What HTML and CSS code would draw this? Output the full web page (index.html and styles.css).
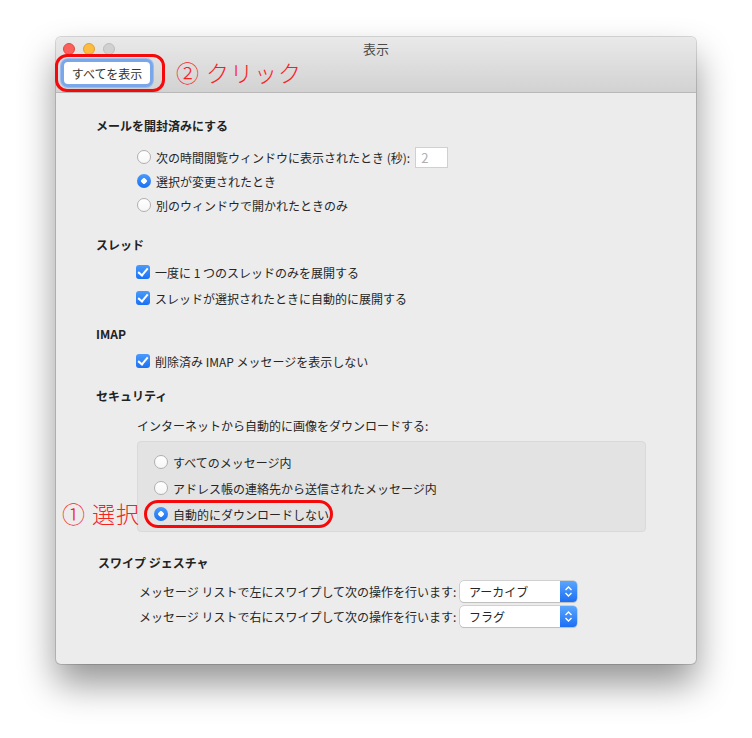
FILE: index.html
```html
<!DOCTYPE html>
<html lang="ja">
<head>
    <meta charset="UTF-8">
    <title>表示</title>
    <link rel="stylesheet" href="styles.css">
</head>
<body>
<div class="window">
    <div class="titlebar">
        <div class="title-row">
            <div class="lights">
                <span class="light red"></span>
                <span class="light yellow"></span>
                <span class="light gray"></span>
            </div>
            <div class="title">表示</div>
        </div>
        <div class="toolbar">
            <button class="show-all">すべてを表示</button>
        </div>
    </div>

    <div class="content">
        <section class="group">
            <h2>メールを開封済みにする</h2>
            <div class="rows">
                <label class="row"><span class="radio"></span>次の時間閲覧ウィンドウに表示されたとき (秒):<span class="num">2</span></label>
                <label class="row"><span class="radio on"></span>選択が変更されたとき</label>
                <label class="row"><span class="radio"></span>別のウィンドウで開かれたときのみ</label>
            </div>
        </section>

        <section class="group threads">
            <h2>スレッド</h2>
            <div class="rows checks">
                <label class="row"><span class="check"></span>一度に 1 つのスレッドのみを展開する</label>
                <label class="row"><span class="check"></span>スレッドが選択されたときに自動的に展開する</label>
            </div>
        </section>

        <section class="group imap">
            <h2>IMAP</h2>
            <div class="rows checks">
                <label class="row"><span class="check"></span>削除済み IMAP メッセージを表示しない</label>
            </div>
        </section>

        <section class="group security">
            <h2>セキュリティ</h2>
            <p class="desc">インターネットから自動的に画像をダウンロードする:</p>
            <div class="inset">
                <label class="row"><span class="radio"></span>すべてのメッセージ内</label>
                <label class="row"><span class="radio"></span>アドレス帳の連絡先から送信されたメッセージ内</label>
                <label class="row"><span class="radio on"></span>自動的にダウンロードしない</label>
            </div>
        </section>

        <section class="group swipe">
            <h2>スワイプ ジェスチャ</h2>
            <div class="rows">
                <div class="row">
                    <span class="label">メッセージ リストで左にスワイプして次の操作を行います:</span>
                    <span class="popup"><span class="value">アーカイブ</span><span class="arrows"><svg width="9" height="13" viewBox="0 0 9 13"><path d="M1.5 5 L4.5 2 L7.5 5 M1.5 8 L4.5 11 L7.5 8" fill="none" stroke="#fff" stroke-width="1.4"/></svg></span></span>
                </div>
                <div class="row">
                    <span class="label">メッセージ リストで右にスワイプして次の操作を行います:</span>
                    <span class="popup"><span class="value">フラグ</span><span class="arrows"><svg width="9" height="13" viewBox="0 0 9 13"><path d="M1.5 5 L4.5 2 L7.5 5 M1.5 8 L4.5 11 L7.5 8" fill="none" stroke="#fff" stroke-width="1.4"/></svg></span></span>
                </div>
            </div>
        </section>
    </div>

    <!-- 注釈 -->
    <div class="mark mark-button"></div>
    <div class="note note-click">② クリック</div>
    <div class="mark mark-radio"></div>
    <div class="note note-select">① 選択</div>
</div>
</body>
</html>
```

FILE: styles.css
```css
html, body {
    min-height: 738px;
}
body {
    margin: 0;
    background: #fff;
    font-family: "Noto Sans CJK JP", "Noto Sans", sans-serif;
    font-size: 12px;
    color: #262626;
}
.window {
    position: relative;
    margin: 37px 0 0 56px;
    width: 640px;
    height: 627px;
    background: #ececec;
    border-radius: 5px;
    box-shadow: 0 0 0 1px rgba(0, 0, 0, 0.14), 0 20px 36px rgba(0, 0, 0, 0.42);
}
.titlebar {
    height: 55px;
    border-bottom: 1px solid #b9b9b9;
    border-radius: 5px 5px 0 0;
    background: linear-gradient(#e9e9e9, #d2d2d2);
    display: flex;
    flex-direction: column;
}
.title-row {
    height: 22px;
    display: flex;
    align-items: center;
    position: relative;
}
.lights {
    display: flex;
    gap: 8px;
    padding-left: 7px;
    padding-top: 1px;
}
.light {
    width: 12px;
    height: 12px;
    border-radius: 50%;
    box-sizing: border-box;
}
.red { background: #fc605b; border: 1px solid #de4a43; }
.yellow { background: #fdbc40; border: 1px solid #dea135; }
.gray { background: #d0d0d0; border: 1px solid #bdbdbd; }
.title {
    position: absolute;
    left: 0;
    right: 0;
    text-align: center;
    font-size: 13px;
    color: #4a4a4a;
    top: 2px;
}
.toolbar {
    display: flex;
    padding: 3px 0 0 8px;
}
.show-all {
    font-family: inherit;
    font-size: 12px;
    color: #333;
    background: #fff;
    border: none;
    border-radius: 4px;
    height: 22px;
    width: 86px;
    padding: 0;
    box-shadow: 0 0 0 3px #7aa6ea, 0 0 0 4px #9dbcee;
}
.content {
    padding: 25px 0 0 40px;
    display: flex;
    flex-direction: column;
}
h2 {
    margin: 0;
    font-size: 12px;
    font-weight: bold;
    line-height: 16px;
    color: #222;
}
.rows {
    display: flex;
    flex-direction: column;
    margin: 11px 0 0 41px;
}
.row {
    display: flex;
    align-items: center;
    height: 24px;
    white-space: nowrap;
}
.checks {
    margin-top: 7px;
    gap: 2px;
}
.radio {
    width: 14px;
    height: 14px;
    box-sizing: border-box;
    border-radius: 50%;
    background: linear-gradient(#fff, #f6f6f6);
    border: 1px solid #b0b0b0;
    margin-right: 5px;
    flex: none;
}
.radio.on {
    border: none;
    background: radial-gradient(circle, #fff 0 2.5px, transparent 3px), linear-gradient(#4a9bfb, #1a70f4);
}
.check {
    width: 14px;
    height: 14px;
    border-radius: 3px;
    background: linear-gradient(#4a9bfb, #1a70f4);
    margin: 0 5px 0 -1px;
    flex: none;
    position: relative;
}
.check::after {
    content: "";
    position: absolute;
    left: 4px;
    top: 1px;
    width: 4px;
    height: 8px;
    border: solid #fff;
    border-width: 0 2px 2px 0;
    transform: rotate(40deg);
}
.num {
    margin-left: 5px;
    width: 33px;
    height: 21px;
    box-sizing: border-box;
    background: #fff;
    border: 1px solid #d0d0d0;
    color: #b0b0b0;
    font-size: 13px;
    line-height: 19px;
    padding-left: 5px;
}
.threads { margin-top: 20px; }
.imap { margin-top: 16px; }
.security { margin-top: 15px; }
.desc {
    margin: 14px 0 0 41px;
    line-height: 16px;
}
.inset {
    margin: 7px 0 0 41px;
    width: 509px;
    height: 91px;
    box-sizing: border-box;
    padding: 8px 0 0 16px;
    background: #e3e3e3;
    border: 1px solid #d9d9d9;
    border-radius: 4px;
    display: flex;
    flex-direction: column;
    gap: 2px;
}
.swipe {
    margin-top: 23px;
    margin-left: 2px;
}
.swipe .rows {
    margin: 8px 0 0 41px;
    gap: 1px;
}
.label {
    width: 321px;
}
.popup {
    display: flex;
    width: 117px;
    height: 21px;
    box-sizing: border-box;
    background: #fff;
    border-radius: 4px;
    box-shadow: 0 0 0 0.5px #b3b3b3, 0 1px 1px rgba(0, 0, 0, 0.15);
    overflow: hidden;
}
.value {
    flex: 1;
    padding-left: 9px;
    line-height: 21px;
    font-size: 12px;
}
.arrows {
    width: 17px;
    background: linear-gradient(#5aa6fd, #1c6ff4);
    display: flex;
    align-items: center;
    justify-content: center;
}
.mark {
    position: absolute;
    border: 3px solid #f5090b;
    box-sizing: border-box;
}
.mark-button {
    left: -1px;
    top: 17px;
    width: 110px;
    height: 38px;
    border-radius: 12px;
}
.mark-radio {
    left: 88px;
    top: 463px;
    width: 189px;
    height: 28px;
    border-radius: 14px;
}
.note {
    position: absolute;
    color: #f5231d;
    font-size: 23px;
    font-weight: 300;
    letter-spacing: 1px;
    line-height: 26px;
    white-space: nowrap;
}
.note-click {
    left: 120px;
    top: 22px;
}
.note-select {
    left: 6px;
    top: 463px;
}
```
